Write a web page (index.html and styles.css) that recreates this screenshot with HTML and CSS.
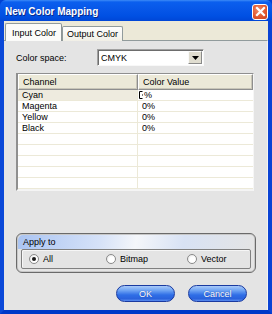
FILE: index.html
```html
<!DOCTYPE html>
<html>
<head>
<meta charset="utf-8">
<link rel="stylesheet" href="styles.css">
</head>
<body>
<div class="window">
  <div class="titlebar">
    <span class="title">New Color Mapping</span>
    <span class="close"><svg width="11" height="11" viewBox="0 0 11 11"><path d="M2 2 L9 9 M9 2 L2 9" stroke="#fff" stroke-width="2.2" stroke-linecap="square"/></svg></span>
  </div>
  <div class="frame">
    <div class="tabs">
      <div class="tab active">Input Color</div>
      <div class="tab">Output Color</div>
    </div>
    <div class="pane">
      <div class="space-row">
        <span class="label">Color space:</span>
        <div class="combo">
          <span class="combo-text">CMYK</span>
          <span class="drop"><svg width="7" height="4" viewBox="0 0 7 4"><path d="M0 0 H7 L3.5 4 Z" fill="#000"/></svg></span>
        </div>
      </div>
      <div class="table">
        <div class="thead">
          <div class="th c1">Channel</div>
          <div class="th c2">Color Value</div>
        </div>
        <div class="tr sel"><div class="td c1">Cyan</div><div class="td c2"><span class="caret"><svg width="4" height="8" viewBox="0 0 4 8"><path d="M3.5 0.5 H0.5 V7.5 H3.5 M3.5 3.5 V4.5" stroke="#000" stroke-width="1" fill="none"/></svg></span>%</div></div>
        <div class="tr"><div class="td c1">Magenta</div><div class="td c2">0%</div></div>
        <div class="tr"><div class="td c1">Yellow</div><div class="td c2">0%</div></div>
        <div class="tr"><div class="td c1">Black</div><div class="td c2">0%</div></div>
        <div class="tr"><div class="td c1"></div><div class="td c2"></div></div>
        <div class="tr"><div class="td c1"></div><div class="td c2"></div></div>
        <div class="tr"><div class="td c1"></div><div class="td c2"></div></div>
        <div class="tr"><div class="td c1"></div><div class="td c2"></div></div>
        <div class="tr"><div class="td c1"></div><div class="td c2"></div></div>
        <div class="tr"><div class="td c1"></div><div class="td c2"></div></div>
      </div>
      <div class="group">
        <div class="group-head">Apply to</div>
        <div class="group-body">
          <label class="radio r1"><span class="dot checked"></span>All</label>
          <label class="radio r2"><span class="dot"></span>Bitmap</label>
          <label class="radio r3"><span class="dot"></span>Vector</label>
        </div>
      </div>
      <div class="buttons">
        <div class="btn">OK</div>
        <div class="btn">Cancel</div>
      </div>
    </div>
  </div>
</div>
</body>
</html>
```

FILE: styles.css
```css
* { box-sizing: border-box; }
html, body { margin: 0; padding: 0; }
body {
  width: 272px;
  height: 314px;
  overflow: hidden;
  font-family: "Liberation Sans", Arial, sans-serif;
  font-size: 9px;
  color: #000;
  background: #0041d3;
}
.window {
  width: 272px;
  height: 314px;
  display: flex;
  flex-direction: column;
}
.titlebar {
  height: 21px;
  flex: none;
  display: flex;
  align-items: center;
  justify-content: space-between;
  padding: 0 4px 0 5px;
  background: linear-gradient(to bottom, #3d8bf7 0px, #0b5fee 2px, #0757e8 9px, #0050e3 16px, #0046d6 21px);
  border-radius: 6px 6px 0 0;
}
.title {
  color: #fff;
  font-weight: bold;
  font-size: 10px;
  padding-top: 2px;
  text-shadow: 1px 1px 0 #0a2a8a;
}
.close {
  width: 16px;
  height: 16px;
  margin-top: 2px;
  border: 1px solid #fff;
  border-radius: 3px;
  background: radial-gradient(circle at 40% 35%, #f08c6c 0%, #e2582f 55%, #c9401e 100%);
  display: flex;
  align-items: center;
  justify-content: center;
}
.frame {
  flex: 1;
  display: flex;
  flex-direction: column;
  border-left: 4px solid #0a48d8;
  border-right: 4px solid #0a43d4;
  border-bottom: 4px solid #0038c8;
  background: #ece9d8;
}
.tabs {
  height: 19px;
  flex: none;
  display: flex;
  align-items: flex-end;
  padding-left: 1px;
}
.tab {
  height: 15px;
  padding: 0 4px;
  margin-bottom: -1px;
  border: 1px solid #919b9c;
  border-bottom: none;
  border-radius: 2px 2px 0 0;
  background: linear-gradient(to bottom, #fefefe, #f1efe6);
  display: flex;
  align-items: center;
  position: relative;
}
.tab.active {
  height: 18px;
  padding: 0 5px 0 6px;
  background: #fbfbf9;
  z-index: 1;
  border-right: 1px solid #8c9495;
}
.pane {
  flex: 1;
  background: #e4e4e4;
  border-top: 1px solid #919b9c;
  border-right: 1px solid #f3f3f3;
  padding: 8px 12px 0 12px;
  display: flex;
  flex-direction: column;
}
.space-row {
  display: flex;
  align-items: center;
  height: 17px;
}
.label {
  width: 81px;
  padding-top: 1px;
}
.combo {
  width: 107px;
  height: 17px;
  background: #fff;
  border: 1px solid #7f9db9;
  border-color: #a0a0a0 #f8f8f8 #f8f8f8 #a0a0a0;
  box-shadow: inset 1px 1px 0 #6d6d6d;
  display: flex;
  align-items: center;
  justify-content: space-between;
  padding: 1px 1px 1px 3px;
}
.combo-text { padding-top: 1px; }
.drop {
  width: 14px;
  height: 13px;
  background: #e0ddd0;
  border: 1px solid;
  border-color: #fafafa #8a8a8a #8a8a8a #fafafa;
  display: flex;
  align-items: center;
  justify-content: center;
}
.table {
  margin-top: 7px;
  width: 238px;
  height: 118px;
  background: #fff;
  border-left: 2px solid #8f8f8f;
  border-top: 1px solid #8f8f8f;
  border-right: 1px solid #f6f6f6;
  border-bottom: 2px solid #f4f4f4;
  overflow: hidden;
}
.thead {
  display: flex;
  height: 16px;
  background: #ece9d8;
}
.th {
  height: 16px;
  display: flex;
  align-items: center;
  padding-left: 4px;
  border: 1px solid;
  border-color: #fff #8e8e8e #8e8e8e #fff;
  box-shadow: inset -1px -1px 0 #c9c6b8;
}
.th.c1 { width: 120px; }
.th.c2 { flex: 1; }
.tr {
  display: flex;
  height: 11px;
  border-bottom: 1px solid #ece9d8;
}
.tr.sel .c1 { background: #eeebdf; }
.td {
  height: 10px;
  line-height: 10px;
  padding-left: 4px;
}
.td.c1 { width: 120px; border-right: 1px solid #ece9d8; }
.td.c2 { flex: 1; padding-left: 4px; }
.caret {
  display: inline-block;
  vertical-align: top;
  margin-left: -3px;
  margin-top: 1px;
  margin-right: 1px;
  height: 8px;
  line-height: 0;
}
.group {
  margin-top: 42px;
  width: 240px;
  height: 40px;
  border: 1px solid #6a6a6a;
  border-radius: 6px;
  box-shadow: inset 0 0 0 1px #c8c8c8;
  padding: 1px 4px 0 4px;
  background: #e4e4e4;
}
.group-head {
  height: 14px;
  margin: 0 -3px;
  padding-left: 5px;
  padding-top: 2px;
  border-radius: 5px 5px 0 0;
  background: linear-gradient(100deg, #aac4f2 0%, #d6e2f8 35%, #f4f6fa 50%, #d8e2f4 70%, #e4e4e4 100%);
}
.group-body {
  height: 20px;
  border: 1px solid #808080;
  border-radius: 2px;
  box-shadow: inset 1px 1px 0 #f6f6f6;
  display: flex;
  align-items: center;
  padding-left: 7px;
}
.radio {
  display: flex;
  align-items: center;
  gap: 4px;
}
.r1 { width: 77px; }
.r2 { width: 81px; }
.dot {
  width: 10px;
  height: 10px;
  border-radius: 50%;
  border: 1px solid #8a8a8a;
  background: radial-gradient(circle at 60% 60%, #ffffff 40%, #dcdcdc 100%);
  position: relative;
}
.dot.checked::after {
  content: "";
  position: absolute;
  left: 2px;
  top: 2px;
  width: 4px;
  height: 4px;
  border-radius: 50%;
  background: #1a1a1a;
}
.buttons {
  margin-top: 12px;
  display: flex;
  justify-content: flex-end;
  gap: 13px;
  padding-right: 8px;
}
.btn {
  width: 59px;
  height: 17px;
  border: 1px solid #1a3aa0;
  border-radius: 9px;
  background: linear-gradient(to bottom, #a9caf9 0%, #6ea3f3 30%, #2f6ee6 60%, #2a62dc 85%, #5c8ef0 100%);
  color: #fff;
  display: flex;
  align-items: center;
  justify-content: center;
  text-shadow: 0 0 1px #1b3f9f;
}
```
